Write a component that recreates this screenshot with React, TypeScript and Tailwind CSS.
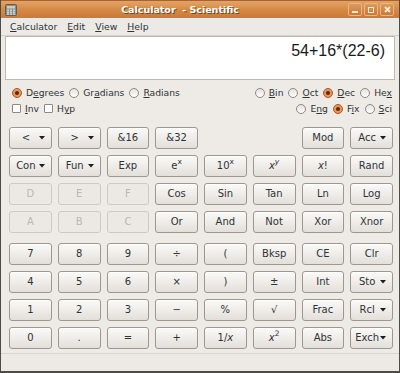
import React from 'react';

type Key = { label: React.ReactNode; menu?: boolean; disabled?: boolean } | null;

const U = ({ children }: { children: React.ReactNode }) => (
  <span className="underline underline-offset-[1px]">{children}</span>
);

const Radio = ({ checked = false }: { checked?: boolean }) => (
  <span
    className={`relative inline-block w-[10px] h-[10px] shrink-0 rounded-full border ${
      checked ? 'border-[#a85a26] bg-[#e8955c]' : 'border-[#8e8983] bg-gradient-to-b from-[#e4e2df] to-white'
    }`}
  >
    {checked && <span className="absolute left-[2px] top-[2px] w-[4px] h-[4px] rounded-full bg-[#5e2a0b]" />}
  </span>
);

const Option = ({ checked, children }: { checked?: boolean; children: React.ReactNode }) => (
  <span className="flex items-center gap-[4px]">
    <Radio checked={checked} />
    <span>{children}</span>
  </span>
);

const Check = ({ children }: { children: React.ReactNode }) => (
  <span className="flex items-center gap-[4px]">
    <span className="inline-block w-[9px] h-[9px] border border-[#8e8983] bg-white rounded-[1px]" />
    <span>{children}</span>
  </span>
);

const Arrow = () => (
  <svg width="6" height="4" viewBox="0 0 6 4" className="shrink-0">
    <path d="M0 0H6L3 3.6Z" fill="#1e1e1e" />
  </svg>
);

const X = () => <i>x</i>;

const topKeys: Key[] = [
  { label: '<', menu: true },
  { label: '>', menu: true },
  { label: '&16' },
  { label: '&32' },
  null,
  null,
  { label: 'Mod' },
  { label: 'Acc', menu: true },
  { label: 'Con', menu: true },
  { label: 'Fun', menu: true },
  { label: 'Exp' },
  { label: <>e<sup>x</sup></> },
  { label: <>10<sup>x</sup></> },
  { label: <><X /><sup><i>y</i></sup></> },
  { label: <><X />!</> },
  { label: 'Rand' },
  { label: 'D', disabled: true },
  { label: 'E', disabled: true },
  { label: 'F', disabled: true },
  { label: 'Cos' },
  { label: 'Sin' },
  { label: 'Tan' },
  { label: 'Ln' },
  { label: 'Log' },
  { label: 'A', disabled: true },
  { label: 'B', disabled: true },
  { label: 'C', disabled: true },
  { label: 'Or' },
  { label: 'And' },
  { label: 'Not' },
  { label: 'Xor' },
  { label: 'Xnor' },
];

const numKeys: Key[] = [
  { label: '7' },
  { label: '8' },
  { label: '9' },
  { label: '÷' },
  { label: '(' },
  { label: 'Bksp' },
  { label: 'CE' },
  { label: 'Clr' },
  { label: '4' },
  { label: '5' },
  { label: '6' },
  { label: '×' },
  { label: ')' },
  { label: '±' },
  { label: 'Int' },
  { label: 'Sto', menu: true },
  { label: '1' },
  { label: '2' },
  { label: '3' },
  { label: '−' },
  { label: '%' },
  { label: '√' },
  { label: 'Frac' },
  { label: 'Rcl', menu: true },
  { label: '0' },
  { label: '.' },
  { label: '=' },
  { label: '+' },
  { label: <>1/<X /></> },
  { label: <><X /><sup>2</sup></> },
  { label: 'Abs' },
  { label: 'Exch', menu: true },
];

const KeyButton = ({ k }: { k: Key }) => {
  if (!k) return <div />;
  const base = 'h-[22px] rounded-[3px] border text-[10px] leading-none flex items-center';
  const look = k.disabled
    ? 'border-[#cfcac4] bg-[#ece9e5] text-[#bcb7b0]'
    : 'border-[#9d978f] bg-gradient-to-b from-[#fbfaf8] to-[#e3dfda] text-[#2e3436] shadow-[inset_0_1px_0_#ffffff]';
  if (k.menu) {
    return (
      <button className={`${base} ${look} pl-[3px] pr-[6px]`}>
        <span className="flex-1 text-center">{k.label}</span>
        <Arrow />
      </button>
    );
  }
  return <button className={`${base} ${look} justify-center`}>{k.label}</button>;
};

const TitleButton = ({ children }: { children: React.ReactNode }) => (
  <div className="w-[14px] h-[13px] rounded-[2px] border border-[#eab586] bg-gradient-to-b from-[#dc9a5c] to-[#c97a37] flex items-center justify-center">
    {children}
  </div>
);

export default function App() {
  return (
    <div className="w-[400px] h-[373px] bg-[#eeebe7] border-x border-b-2 border-[#4f4b47] flex flex-col font-['DejaVu_Sans','Liberation_Sans',sans-serif] text-[#2e3436] overflow-hidden">
      {/* title bar */}
      <div className="relative h-[18px] shrink-0 -mx-px bg-gradient-to-b from-[#e3a468] via-[#d68a43] to-[#c9793a] border-t border-[#a8642c] flex items-center px-[5px] leading-none">
        <svg width="12" height="12" viewBox="0 0 12 12">
          <rect x="0.5" y="0.5" width="11" height="11" rx="1" fill="#8a8d89" stroke="#5c5e5b" />
          <rect x="2" y="2" width="8" height="2.5" fill="#c9ccc8" />
          {[0, 1, 2].map(r =>
            [0, 1, 2].map(c => (
              <rect key={`${r}${c}`} x={2 + c * 3} y={5.5 + r * 2} width="2" height="1.3" fill="#d9dbd8" />
            ))
          )}
        </svg>
        <div className="absolute inset-0 flex items-center justify-center pointer-events-none pr-[40px]">
          <span className="text-[9.5px] font-bold text-white leading-none [text-shadow:1px_1px_0_#7a4516] whitespace-pre">
            Calculator  - Scientific
          </span>
        </div>
        <div className="ml-auto flex gap-[2px] mr-[1px]">
          <TitleButton>
            <span className="mt-[5px] w-[6px] h-[2px] bg-[#fbe9d8]" />
          </TitleButton>
          <TitleButton>
            <span className="w-[6px] h-[6px] border border-[#fbe9d8]" />
          </TitleButton>
          <TitleButton>
            <svg width="7" height="7" viewBox="0 0 7 7">
              <path d="M1 1L6 6M6 1L1 6" stroke="#fbe9d8" strokeWidth="1.8" />
            </svg>
          </TitleButton>
        </div>
      </div>

      {/* menu bar */}
      <div className="h-[18px] shrink-0 flex items-center gap-[10px] pl-[9px] text-[9.3px] border-b border-[#d6d1cb] bg-[#edeae6]">
        <span><U>C</U>alculator</span>
        <span><U>E</U>dit</span>
        <span><U>V</U>iew</span>
        <span><U>H</U>elp</span>
      </div>

      {/* display */}
      <div className="mx-[4px] h-[44px] shrink-0 bg-white border border-[#bdb8b1] flex justify-end pr-[9px] pt-[4px]">
        <span className="font-['Liberation_Sans',sans-serif] text-[16px] leading-[20px] text-[#1a1a1a]">54+16*(22-6)</span>
      </div>

      {/* modes */}
      <div className="pt-[5px] pl-[11px] pr-[7px] text-[9.2px] leading-none">
        <div className="h-[16px] flex items-center justify-between">
          <div className="flex items-center gap-[5px]">
            <Option checked>D<U>e</U>grees</Option>
            <Option>Gr<U>a</U>dians</Option>
            <Option><U>R</U>adians</Option>
          </div>
          <div className="flex items-center gap-[5px]">
            <Option><U>B</U>in</Option>
            <Option><U>O</U>ct</Option>
            <Option checked><U>D</U>ec</Option>
            <Option>He<U>x</U></Option>
          </div>
        </div>
        <div className="h-[16px] flex items-center justify-between">
          <div className="flex items-center gap-[5px]">
            <Check><U>I</U>nv</Check>
            <Check>H<U>y</U>p</Check>
          </div>
          <div className="flex items-center gap-[5px]">
            <Option>E<U>n</U>g</Option>
            <Option checked>F<U>i</U>x</Option>
            <Option><U>S</U>ci</Option>
          </div>
        </div>
      </div>

      {/* keys */}
      <div className="pl-[8px] pr-[6px] mt-[10px]">
        <div className="grid grid-cols-8 gap-x-[6px] gap-y-[6px]">
          {topKeys.map((k, i) => (
            <KeyButton key={i} k={k} />
          ))}
        </div>
        <div className="grid grid-cols-8 gap-x-[6px] gap-y-[6px] mt-[10px]">
          {numKeys.map((k, i) => (
            <KeyButton key={i} k={k} />
          ))}
        </div>
      </div>

      {/* status bar */}
      <div className="mt-auto h-[18px] shrink-0 border-t border-[#d9d4ce] bg-[#edeae6]" />
    </div>
  );
}
